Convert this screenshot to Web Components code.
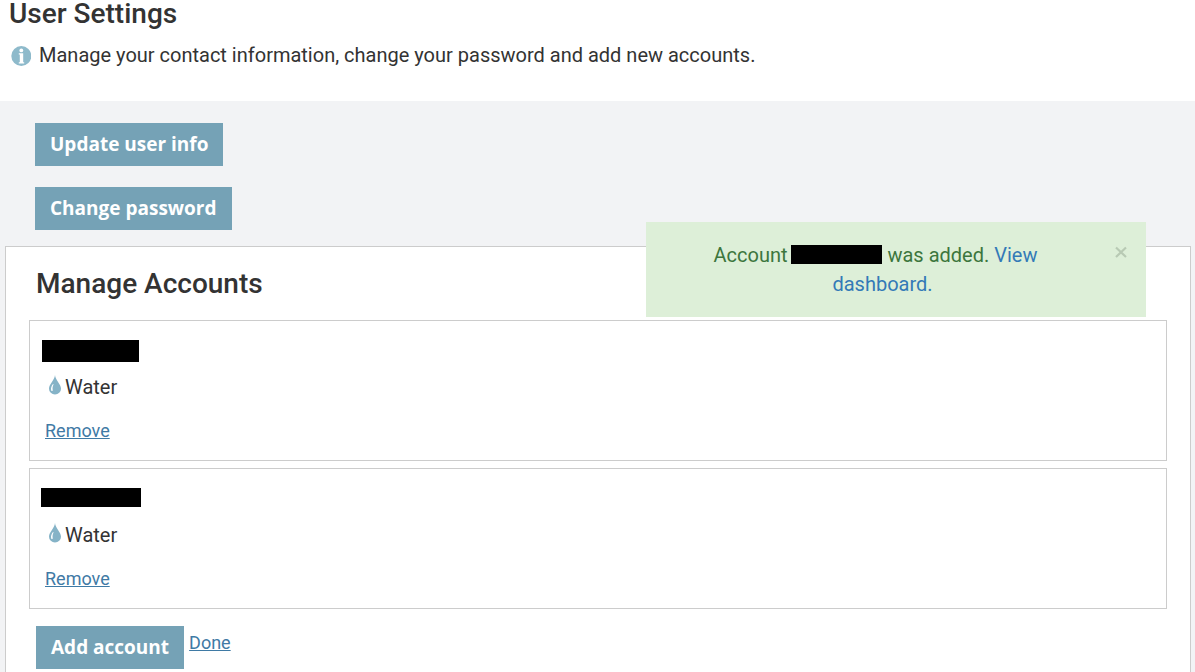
<!DOCTYPE html>
<html lang="en">
<head>
<meta charset="utf-8">
<title>User Settings</title>
<style>
  body { margin: 0; font: 20px/29px Roboto, "Liberation Sans", sans-serif; color: #333; background: #f2f3f5; }
</style>
</head>
<body>
<settings-page></settings-page>

<script>
const define = (name, html, setup) => customElements.define(name, class extends HTMLElement {
  connectedCallback() {
    if (this.shadowRoot) return;
    this.attachShadow({ mode: "open" }).innerHTML = html;
    if (setup) setup(this);
  }
});

define("redacted-text", `
  <style>
    :host { display: inline-block; background: #000; width: 100px; height: 19px; }
  </style>`);

define("info-icon", `
  <style>:host { display: block; width: 20px; height: 20px; } svg { display: block; }</style>
  <svg width="20" height="20" viewBox="0 0 20 20" aria-hidden="true">
    <circle cx="10.300" cy="10" r="10" fill="#8ebacb"/>
    <circle cx="10.300" cy="4.400" r="1.900" fill="#fff"/>
    <path d="M7.800 7.300h4.400v9h1v1.200H7.800v-1.200h1V8.600h-1z" fill="#fff"/>
  </svg>`);

define("drop-icon", `
  <style>:host { display: block; width: 12px; height: 20px; } svg { display: block; }</style>
  <svg width="12" height="20" viewBox="0 0 12 20" aria-hidden="true">
    <path d="M6 0C5.800 5 0 9 0 13.800a6 5.700 0 0 0 12 0C12 9 6.200 5 6 0z" fill="#85b3c7"/>
    <path d="M4 9C2.400 11.200 1.600 13.200 2.200 15.400c.7 1.100 1.700.7 1.500-.4-.3-1.900-.1-3.700.9-5.400z" fill="#fff"/>
  </svg>`);

define("action-button", `
  <style>
    :host { display: block; width: fit-content; }
    button { display: block; border: 0; margin: 0; padding: 0 15px; background: #75a2b6; color: #fff;
      font: bold 19px/43px "Open Sans", "Noto Sans", sans-serif; cursor: pointer; }
  </style>
  <button type="button"><slot></slot></button>`);

define("text-link", `
  <style>
    :host { display: inline; }
    a { color: #3f7aa5; text-decoration: underline; }
    :host([plain]) a { color: #337ab7; text-decoration: none; }
  </style>
  <a href="#"><slot></slot></a>`);

define("account-card", `
  <style>
    :host { display: block; box-sizing: border-box; height: 141px; border: 1px solid #ccc; background: #fff; padding: 19px 15px 0 12px; }
    .name { display: flex; height: 22px; }
    .service { display: flex; align-items: center; gap: 4px; padding: 11px 0 0 7px; }
    drop-icon { margin-bottom: 6px; }
    .remove { padding: 14px 0 0 3px; font-size: 18px; }
  </style>
  <div class="name"><slot name="name"></slot></div>
  <div class="service"><drop-icon></drop-icon><slot></slot></div>
  <div class="remove"><text-link>Remove</text-link></div>`);

define("alert-message", `
  <style>
    :host { display: block; box-sizing: border-box; width: 500px; max-width: 100%; padding: 19px 15px 18px; background: #ddefd8; color: #3c763d; }
    .row { display: flex; align-items: flex-start; }
    p { flex: 1; margin: 0 52px 0 42px; text-align: center; text-indent: -14px; }
    button { border: 0; margin: 0 3px 0 0; padding: 4px 0; background: none; cursor: pointer; }
    svg { display: block; }
  </style>
  <div class="row" role="alert">
    <p><slot></slot></p>
    <button type="button" aria-label="Close">
      <svg width="14" height="14" viewBox="0 0 14 14"><path d="M2 2.500l10 9.500M12 2.500L2 12" stroke="#b8cab4" stroke-width="2.200"/></svg>
    </button>
  </div>`);

define("settings-page", `
  <style>
    :host { display: flex; flex-direction: column; min-height: 100vh; }
    header { background: #fff; padding: 0 9px 31px; }
    h1, h2 { margin: 0; font-weight: 500; font-size: 28px; line-height: 28px; }
    .intro { display: flex; align-items: center; gap: 8px; padding: 13px 2px 0; }
    .intro p { margin: 0; }
    main { position: relative; flex: 1; display: flex; flex-direction: column; padding: 22px 4px 0 5px; }
    .actions { display: flex; flex-direction: column; gap: 21px; padding: 0 30px 16px; }
    .panel { flex: 1; background: #fff; border: 1px solid #ccc; border-bottom: 0; padding: 23px 23px 3px; }
    h2 { padding: 0 7px 22px; }
    .list { display: grid; gap: 7px; }
    .footer { display: flex; gap: 5px; padding: 17px 7px 0; font-size: 18px; }
    .footer span { padding-top: 2px; }
    .one { width: 97px; height: 22px; }
    .inline { width: 91px; vertical-align: -2px; margin: 0 1px 0 -2px; }
    .two { margin-left: -1px; }
    alert-message { position: absolute; top: 121px; right: 49px; }
  </style>
  <header>
    <h1>User Settings</h1>
    <div class="intro"><info-icon></info-icon><p>Manage your contact information, change your password and add new accounts.</p></div>
  </header>
  <main>
    <div class="actions">
      <action-button>Update user info</action-button>
      <action-button>Change password</action-button>
    </div>
    <section class="panel">
      <h2>Manage Accounts</h2>
      <div class="list">
        <account-card><redacted-text slot="name" class="one"></redacted-text>Water</account-card>
        <account-card><redacted-text slot="name" class="two"></redacted-text>Water</account-card>
      </div>
      <div class="footer"><action-button>Add account</action-button><span><text-link>Done</text-link></span></div>
    </section>
    <alert-message>Account <redacted-text class="inline"></redacted-text> was added. <text-link plain>View dashboard.</text-link></alert-message>
  </main>`);
</script>
</body>
</html>
